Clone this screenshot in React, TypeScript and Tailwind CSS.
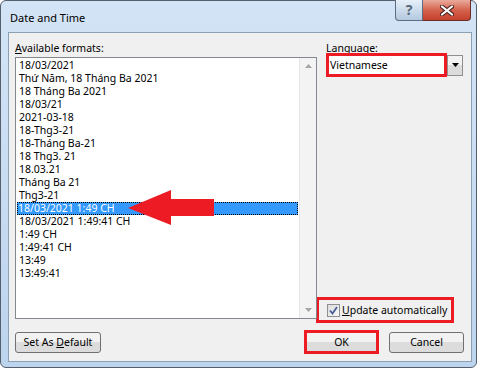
const formats = [
  "18/03/2021",
  "Thứ Năm, 18 Tháng Ba 2021",
  "18 Tháng Ba 2021",
  "18/03/21",
  "2021-03-18",
  "18-Thg3-21",
  "18-Tháng Ba-21",
  "18 Thg3. 21",
  "18.03.21",
  "Tháng Ba 21",
  "Thg3-21",
  "18/03/2021 1:49 CH",
  "18/03/2021 1:49:41 CH",
  "1:49 CH",
  "1:49:41 CH",
  "13:49",
  "13:49:41",
];

const SELECTED = 11;

function WinButton({ children, className = "" }: { children: React.ReactNode; className?: string }) {
  return (
    <div
      className={
        "flex h-[21px] items-center justify-center rounded-[3px] border border-[#707070] bg-gradient-to-b from-[#f2f2f2] from-50% to-[#dcdcdc] to-50% " +
        className
      }
    >
      <span className="whitespace-nowrap">{children}</span>
    </div>
  );
}

function TitleBar() {
  return (
    <div className="relative flex h-[31px] items-center pl-[2px] pt-[1px]">
      <span className="text-[11px]">Date and Time</span>
      <div className="absolute -top-px left-[387px] flex">
        <div className="flex h-[21px] w-[28px] items-center justify-center rounded-bl-[4px] border border-t-0 border-[#5d6c80] bg-gradient-to-b from-[#e6eff9] via-[#cddcec] to-[#b4c8de] text-[14px] font-bold text-[#56677b]">
          ?
        </div>
        <div className="flex h-[21px] w-[48px] items-center justify-center rounded-br-[4px] border border-l-0 border-t-0 border-[#6b2e26] bg-gradient-to-b from-[#eaaa9c] via-[#d4624e] to-[#c4402b]">
          <svg width="14" height="11" viewBox="0 0 14 11">
            <path d="M2 1.5 L12 9.5 M12 1.5 L2 9.5" stroke="#4e2621" strokeWidth="4.2" strokeLinecap="round" />
            <path d="M2 1.5 L12 9.5 M12 1.5 L2 9.5" stroke="#ffffff" strokeWidth="2.2" strokeLinecap="round" />
          </svg>
        </div>
      </div>
    </div>
  );
}

function Scrollbar() {
  return (
    <div className="flex w-[17px] flex-col items-center justify-between border-l border-[#e6e6e6] bg-[#f3f3f3] pt-[6px] pb-[6px]">
      <svg width="7" height="4" viewBox="0 0 7 4">
        <path d="M0 4 L3.5 0 L7 4 Z" fill="#a5a5a5" />
      </svg>
      <svg width="7" height="4" viewBox="0 0 7 4">
        <path d="M0 0 L3.5 4 L7 0 Z" fill="#a5a5a5" />
      </svg>
    </div>
  );
}

function FormatList() {
  return (
    <div className="relative mt-px flex h-[262px] border border-[#828790] bg-white">
      <div className="flex-1 pt-px">
        {formats.map((f, i) => (
          <div
            key={f}
            className={
              i === SELECTED
                ? "mx-px h-[13px] whitespace-nowrap bg-[#3399ff] pl-px leading-[12px] text-white outline outline-1 -outline-offset-1 outline-dotted outline-black"
                : "mx-px h-[13px] whitespace-nowrap pl-[2px] leading-[13px]"
            }
          >
            {f}
          </div>
        ))}
      </div>
      <Scrollbar />
      <svg className="absolute left-[111px] top-[131px]" width="88" height="37" viewBox="0 0 88 37">
        <polygon points="1,19 44,1 44,10 87,10 87,27 44,27 44,36" fill="#ed1c24" />
      </svg>
    </div>
  );
}

function Checkbox() {
  return (
    <div className="flex h-[13px] w-[13px] items-center justify-center border border-[#8e8f8f] bg-gradient-to-br from-[#dcdcdc] to-[#f8f8f8]">
      <svg width="9" height="9" viewBox="0 0 9 9">
        <path d="M1 4.5 L3.5 7.5 L8 1" stroke="#4a5f97" strokeWidth="1.8" fill="none" />
      </svg>
    </div>
  );
}

export default function App() {
  return (
    <div className="h-[371px] w-[480px] bg-white text-[10.5px] leading-none text-black [font-family:'Noto_Sans',sans-serif]">
      <div className="relative flex h-[368px] w-[477px] flex-col rounded-[6px] border border-[#56606d] bg-gradient-to-b from-[#d3e4f6] to-[#bdd4ee] pb-[5px] pl-[7px] pr-[4px]">
        <TitleBar />
        <div className="flex h-[330px] flex-col border border-[#8b9fb5] bg-[#f0f0f0] pb-[7px] pl-[6px] pr-[7px] pt-[7px]">
          <div className="flex h-[279px]">
            <div className="flex w-[302px] flex-col">
              <div className="h-[16px] leading-[16px]">
                <span className="underline">A</span>vailable formats:
              </div>
              <FormatList />
            </div>
            <div className="ml-[9px] flex flex-1 flex-col">
              <div className="h-[13px] leading-[16px]">
                <span className="underline">L</span>anguage:
              </div>
              <div className="flex items-center">
                <div className="flex h-[24px] w-[121px] items-center border-[3px] border-[#ed1c24] bg-white pl-px">
                  Vietnamese
                </div>
                <div className="flex h-[21px] w-[16px] items-center justify-center border border-[#8f8f8f] bg-gradient-to-b from-[#f2f2f2] from-50% to-[#dcdcdc] to-50%">
                  <svg width="7" height="4" viewBox="0 0 7 4">
                    <path d="M0 0 L3.5 4 L7 0 Z" fill="#000" />
                  </svg>
                </div>
              </div>
              <div className="-mb-[4px] -ml-[10px] mt-auto flex h-[26px] w-[138px] items-center border-[3px] border-[#ed1c24] pl-[8px]">
                <Checkbox />
                <span className="ml-[2px] whitespace-nowrap">
                  <span className="underline">U</span>pdate automatically
                </span>
              </div>
            </div>
          </div>
          <div className="mt-[13px] flex justify-between">
            <WinButton className="w-[86px]">
              Set As <span className="underline">D</span>efault
            </WinButton>
            <div className="flex gap-[10px]">
              <div className="relative">
                <WinButton className="w-[75px]">OK</WinButton>
                <div className="absolute -bottom-px -top-[2px] left-0 right-0 border-[3px] border-[#ed1c24]" />
              </div>
              <WinButton className="w-[75px]">Cancel</WinButton>
            </div>
          </div>
        </div>
      </div>
    </div>
  );
}
